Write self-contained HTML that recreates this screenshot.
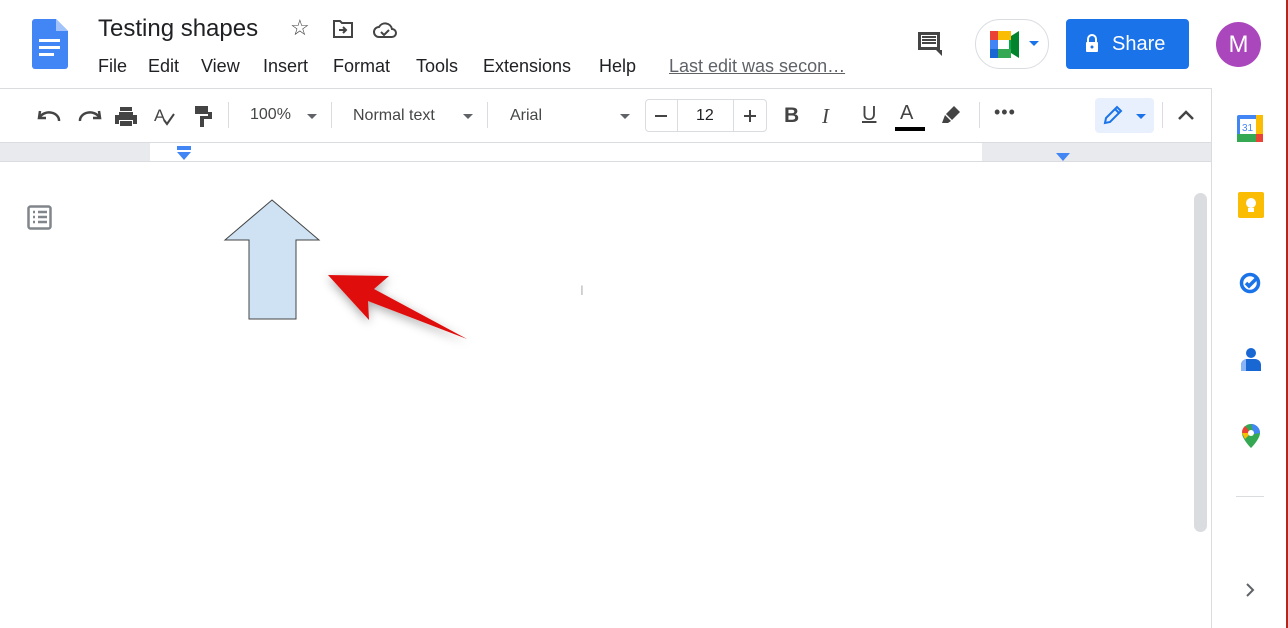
<!DOCTYPE html>
<html><head><style>
*{box-sizing:border-box;margin:0;padding:0}
body{width:1288px;height:628px;overflow:hidden;background:#fff;font-family:"Liberation Sans",Arial,sans-serif;position:relative;color:#202124}
.a{position:absolute}
.menu span{position:absolute;top:56px;font-size:18px;color:#202124}
.tb{font-size:16px;color:#444746}
.sep{position:absolute;top:102px;width:1px;height:26px;background:#dadce0}
.caret{position:absolute;width:0;height:0;border-left:5px solid transparent;border-right:5px solid transparent;border-top:5px solid #5f6368}
</style></head><body>
<div class="a" style="right:0;top:0;width:2px;height:628px;background:#b3261e"></div>
<svg class="a" style="left:32px;top:19px" width="36" height="50" viewBox="0 0 36 50"><path d="M3 0h21l12 12v35a3 3 0 0 1-3 3H3a3 3 0 0 1-3-3V3a3 3 0 0 1 3-3z" fill="#4285f4"/><path d="M24 0v12h12z" fill="#a1c2fa"/><rect x="7" y="20" width="21" height="3" fill="#fff"/><rect x="7" y="27" width="21" height="3" fill="#fff"/><rect x="7" y="34" width="15" height="3" fill="#fff"/></svg>
<div class="a" style="left:98px;top:15px;font-size:24px;color:#202124">Testing shapes</div>
<div class="a" style="left:290px;top:15px;font-size:22px;color:#444">☆</div>
<svg class="a" style="left:332px;top:20px" width="22" height="18" viewBox="0 0 22 18"><path d="M2 1h6l2 2h10v14H2z" fill="none" stroke="#444" stroke-width="2"/><path d="M7 10h7M11 7l3 3-3 3" stroke="#444" stroke-width="2" fill="none"/></svg>
<svg class="a" style="left:373px;top:21px" width="24" height="18" viewBox="0 0 24 18"><path d="M6 16a5 5 0 0 1 0-10 7 7 0 0 1 13 2 4 4 0 0 1 0 8z" fill="none" stroke="#444" stroke-width="2"/><path d="M8 11l3 3 5-5" stroke="#444" stroke-width="2" fill="none"/></svg>
<div class="menu">
<span style="left:98px">File</span><span style="left:148px">Edit</span><span style="left:201px">View</span><span style="left:263px">Insert</span><span style="left:333px">Format</span><span style="left:416px">Tools</span><span style="left:483px">Extensions</span><span style="left:599px">Help</span>
<span style="left:669px;color:#5f6368;text-decoration:underline;font-size:18px">Last edit was secon…</span>
</div>
<svg class="a" style="left:916px;top:30px" width="28" height="28" viewBox="0 0 28 28"><path d="M2 2h22v18h2v6l-6-6H2z" fill="#444"/><rect x="5" y="5" width="16" height="12" fill="#fff"/><path d="M6 7h14M6 10h14M6 13h14" stroke="#444" stroke-width="2"/></svg>
<div class="a" style="left:975px;top:19px;width:74px;height:50px;border:1px solid #dadce0;border-radius:25px"></div>
<svg class="a" style="left:990px;top:31px" width="34" height="27" viewBox="0 0 34 27"><rect x="0" y="0" width="8" height="9" fill="#ea4335"/><rect x="8" y="0" width="13" height="9" fill="#fbbc04"/><rect x="0" y="9" width="8" height="9" fill="#4285f4"/><rect x="0" y="18" width="8" height="9" fill="#1967d2"/><rect x="8" y="18" width="13" height="9" fill="#34a853"/><rect x="8" y="9" width="11" height="9" fill="#fff"/><path d="M21 5l8-5v27l-8-5z" fill="#00832d"/><rect x="19" y="9" width="2" height="9" fill="#00ac47"/></svg>
<div class="caret" style="left:1029px;top:41px;border-top-color:#1a73e8"></div>
<div class="a" style="left:1066px;top:19px;width:123px;height:50px;background:#1a73e8;border-radius:4px;color:#fff;font-size:20px;line-height:50px;padding-left:46px">Share</div>
<svg class="a" style="left:1085px;top:34px" width="14" height="18" viewBox="0 0 14 18"><path d="M3 8V5a4 4 0 0 1 8 0v3" stroke="#fff" stroke-width="2" fill="none"/><rect x="1" y="8" width="12" height="10" rx="1" fill="#fff"/><circle cx="7" cy="13" r="1.5" fill="#1a73e8"/></svg>
<div class="a" style="left:1216px;top:22px;width:45px;height:45px;border-radius:50%;background:#ab47bc;color:#fff;font-size:24px;text-align:center;line-height:45px">M</div>
<div class="a" style="left:0;top:88px;width:1211px;height:1px;background:#dadce0"></div>
<div class="a" style="left:1211px;top:88px;width:1px;height:540px;background:#dadce0"></div>
<svg class="a" style="left:36px;top:104px" width="190" height="24" viewBox="0 0 190 24">
<path d="M4 7l-1 7h7" stroke="#444" stroke-width="2.5" fill="none"/><path d="M4 13a10 8 0 0 1 19 4" stroke="#444" stroke-width="2.5" fill="none"/>
<path d="M63 7l1 7h-7" stroke="#444" stroke-width="2.5" fill="none"/><path d="M63 13a10 8 0 0 0-19 4" stroke="#444" stroke-width="2.5" fill="none"/>
<path d="M83 8h14v3h4v9h-4v-4H83v4h-4v-9h4z" fill="#444"/><rect x="84" y="3" width="12" height="4" fill="#444"/><rect x="84" y="17" width="12" height="5" fill="#444"/>
<text x="118" y="17" font-size="17" fill="#444" font-family="Liberation Sans">A</text><path d="M128 16l3 4 7-10" stroke="#444" stroke-width="2" fill="none"/>
<path d="M159 2h13v6h4v7h-8v8h-4v-11h8v-2h-13z" fill="#444"/>
</svg>
<div class="sep" style="left:228px"></div>
<div class="a tb" style="left:250px;top:106px">100%</div><div class="caret" style="left:307px;top:114px"></div>
<div class="sep" style="left:331px"></div>
<div class="a tb" style="left:353px;top:107px">Normal text</div><div class="caret" style="left:463px;top:114px"></div>
<div class="sep" style="left:487px"></div>
<div class="a tb" style="left:510px;top:107px">Arial</div><div class="caret" style="left:620px;top:114px"></div>
<div class="a" style="left:645px;top:99px;width:122px;height:33px;border:1px solid #dadce0;border-radius:4px"></div>
<div class="a" style="left:677px;top:99px;width:1px;height:33px;background:#dadce0"></div>
<div class="a" style="left:733px;top:99px;width:1px;height:33px;background:#dadce0"></div>
<div class="a" style="left:655px;top:115px;width:12px;height:2px;background:#444"></div>
<div class="a tb" style="left:696px;top:107px;color:#202124">12</div>
<div class="a" style="left:744px;top:115px;width:12px;height:2px;background:#444"></div><div class="a" style="left:749px;top:110px;width:2px;height:12px;background:#444"></div>
<div class="a" style="left:784px;top:104px;font-size:21px;font-weight:bold;color:#444">B</div>
<div class="a" style="left:822px;top:104px;font-size:21px;font-style:italic;color:#444;font-family:'Liberation Serif',serif">I</div>
<div class="a" style="left:862px;top:103px;font-size:20px;color:#444;text-decoration:underline">U</div>
<div class="a" style="left:900px;top:102px;font-size:20px;color:#444">A</div>
<div class="a" style="left:895px;top:127px;width:30px;height:4px;background:#000"></div>
<svg class="a" style="left:940px;top:104px" width="22" height="22" viewBox="0 0 22 22"><path d="M14 2l6 6-8 8-6-6z" fill="#444"/><path d="M5 11l6 6-3 2H2z" fill="#444"/></svg>
<div class="sep" style="left:979px"></div>
<div class="a" style="left:994px;top:102px;font-size:18px;color:#444;letter-spacing:1px">•••</div>
<div class="a" style="left:1095px;top:98px;width:59px;height:35px;background:#e8f0fe;border-radius:4px"></div>
<svg class="a" style="left:1102px;top:104px" width="22" height="22" viewBox="0 0 22 22"><path d="M3 19l1-5L15 3l4 4L8 18z M13 5l4 4" stroke="#1a73e8" stroke-width="2" fill="none"/></svg>
<div class="caret" style="left:1136px;top:114px;border-top-color:#1a73e8"></div>
<div class="sep" style="left:1162px"></div>
<svg class="a" style="left:1177px;top:108px" width="18" height="14" viewBox="0 0 18 14"><path d="M2 11l7-7 7 7" stroke="#444" stroke-width="2.5" fill="none"/></svg>
<div class="a" style="left:0;top:142px;width:1211px;height:1px;background:#dadce0"></div>
<div class="a" style="left:0;top:143px;width:150px;height:18px;background:#e8eaed"></div>
<div class="a" style="left:982px;top:143px;width:229px;height:18px;background:#e8eaed"></div>
<div class="a" style="left:0;top:161px;width:1211px;height:1px;background:#dadce0"></div>
<div class="a" style="left:177px;top:146px;width:14px;height:4px;background:#4285f4"></div>
<div class="a" style="left:177px;top:152px;width:0;height:0;border-left:7px solid transparent;border-right:7px solid transparent;border-top:8px solid #4285f4"></div>
<div class="a" style="left:1056px;top:153px;width:0;height:0;border-left:7px solid transparent;border-right:7px solid transparent;border-top:8px solid #4285f4"></div>
<svg class="a" style="left:27px;top:205px" width="26" height="25" viewBox="0 0 26 25"><rect x="1.5" y="1.5" width="22" height="22" rx="2" fill="none" stroke="#80868b" stroke-width="2.5"/><path d="M6 7h2M11 7h9M6 12h2M11 12h9M6 17h2M11 17h9" stroke="#80868b" stroke-width="2.5"/></svg>
<svg class="a" style="left:0;top:0" width="500" height="360" viewBox="0 0 500 360">
<defs><filter id="s" x="-30%" y="-30%" width="160%" height="160%"><feDropShadow dx="0" dy="3" stdDeviation="5" flood-opacity="0.35"/></filter></defs>
<polygon points="272,200 319,240 296,240 296,319 249,319 249,240 225,240" fill="#cfe2f3" stroke="#444" stroke-width="1"/>
<polygon points="328,275 389,276 374,289 467,339 368,301 369,320" fill="#e00b0b" filter="url(#s)"/>
</svg>
<div class="a" style="left:580px;top:282px;font-size:14px;color:#bbb">I</div>
<div class="a" style="left:1194px;top:193px;width:13px;height:339px;background:#dadce0;border-radius:7px"></div>
<svg class="a" style="left:1237px;top:115px" width="26" height="27" viewBox="0 0 26 27"><rect x="0" y="0" width="26" height="27" rx="2" fill="#4285f4"/><rect x="0" y="19" width="26" height="8" fill="#34a853"/><rect x="19" y="0" width="7" height="27" fill="#fbbc04"/><rect x="19" y="19" width="7" height="8" fill="#ea4335"/><rect x="3" y="4" width="16" height="15" fill="#fff"/><text x="5" y="16" font-size="10" fill="#4285f4" font-family="Liberation Sans">31</text></svg>
<svg class="a" style="left:1238px;top:192px" width="26" height="26" viewBox="0 0 26 26"><rect width="26" height="26" rx="2" fill="#fbbc04"/><circle cx="13" cy="11" r="5" fill="#fff"/><rect x="10" y="16" width="6" height="4" fill="#fff"/></svg>
<svg class="a" style="left:1238px;top:270px" width="26" height="24" viewBox="0 0 26 24"><circle cx="12" cy="13" r="8.5" fill="none" stroke="#1a73e8" stroke-width="3.5"/><path d="M8 13l3 3 9-9" stroke="#1a73e8" stroke-width="3.5" fill="none"/></svg>
<svg class="a" style="left:1240px;top:347px" width="22" height="24" viewBox="0 0 22 24"><circle cx="11" cy="6" r="5" fill="#1967d2"/><path d="M1 24v-6a6 6 0 0 1 6-6h8a6 6 0 0 1 6 6v6z" fill="#1967d2"/><path d="M1 24v-6a6 6 0 0 1 5-6v12z" fill="#8ab4f8"/></svg>
<svg class="a" style="left:1242px;top:424px" width="18" height="24" viewBox="0 0 18 24"><path d="M9 0a9 9 0 0 1 9 9c0 6-9 15-9 15S0 15 0 9a9 9 0 0 1 9-9z" fill="#34a853"/><path d="M9 0a9 9 0 0 1 9 9l-6 1z" fill="#4285f4"/><path d="M0 9a9 9 0 0 1 3-7l6 7z" fill="#ea4335"/><path d="M0 9l9 0-6 6z" fill="#fbbc04"/><circle cx="9" cy="9" r="3" fill="#fff"/></svg>
<div class="a" style="left:1236px;top:496px;width:28px;height:1px;background:#dadce0"></div>
<svg class="a" style="left:1244px;top:582px" width="12" height="16" viewBox="0 0 12 16"><path d="M3 2l6 6-6 6" stroke="#5f6368" stroke-width="2" fill="none"/></svg>
</body></html>
